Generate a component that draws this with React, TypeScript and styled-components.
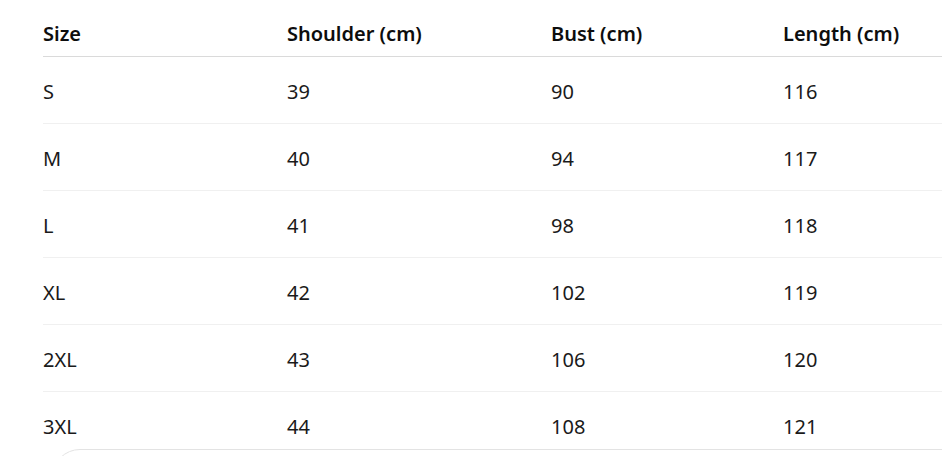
import styled, { createGlobalStyle } from "styled-components"

type Row = {
  size: string,
  shoulder: number,
  bust: number,
  length: number
}

const rows: Row[] = [
  { size: "S", shoulder: 39, bust: 90, length: 116 },
  { size: "M", shoulder: 40, bust: 94, length: 117 },
  { size: "L", shoulder: 41, bust: 98, length: 118 },
  { size: "XL", shoulder: 42, bust: 102, length: 119 },
  { size: "2XL", shoulder: 43, bust: 106, length: 120 },
  { size: "3XL", shoulder: 44, bust: 108, length: 121 },
]

export default function App() {
  return (
    <>
      <GlobalStyle />
      <Page>
        <Table>
          <colgroup>
            <Col $width={244} />
            <Col $width={264} />
            <Col $width={232} />
            <Col $width={159} />
          </colgroup>
          <thead>
            <tr>
              <Th>Size</Th>
              <Th>Shoulder (cm)</Th>
              <Th>Bust (cm)</Th>
              <Th>Length (cm)</Th>
            </tr>
          </thead>
          <tbody>
            {rows.map(row => (
              <Tr key={row.size}>
                <Td>{row.size}</Td>
                <Td>{row.shoulder}</Td>
                <Td>{row.bust}</Td>
                <Td>{row.length}</Td>
              </Tr>
            ))}
          </tbody>
        </Table>
      </Page>
      <Composer />
    </>
  )
}

const GlobalStyle = createGlobalStyle`
  html, body {
    margin: 0;
    background: #ffffff;
    overflow: hidden;
  }

  body {
    font-family: "Noto Sans", "Open Sans", sans-serif;
    color: #0d0d0d;
  }
`

const Page = styled.div`
  padding-top: 20px;
  padding-left: 43px;
`

const Table = styled.table`
  border-collapse: collapse;
  table-layout: fixed;
  width: 899px;
  font-size: 20px;
`

const Col = styled.col<{ $width: number }>`
  width: ${props => props.$width}px;
`

const Th = styled.th`
  text-align: left;
  font-weight: 600;
  line-height: 28px;
  padding: 0 0 8px 0;
  border-bottom: 1px solid #dadada;
  white-space: nowrap;
`

const Tr = styled.tr`
  border-bottom: 1px solid #f0f0f0;

  &:last-child {
    border-bottom: none;
  }
`

const Td = styled.td`
  line-height: 28px;
  padding: 21px 0 17px;
  font-weight: 400;
  color: #1a1a1a;
`

const Composer = styled.div`
  position: fixed;
  left: 52px;
  right: -40px;
  top: 449px;
  height: 120px;
  background: #ffffff;
  border: 1px solid #e3e3e3;
  border-radius: 28px;
`
